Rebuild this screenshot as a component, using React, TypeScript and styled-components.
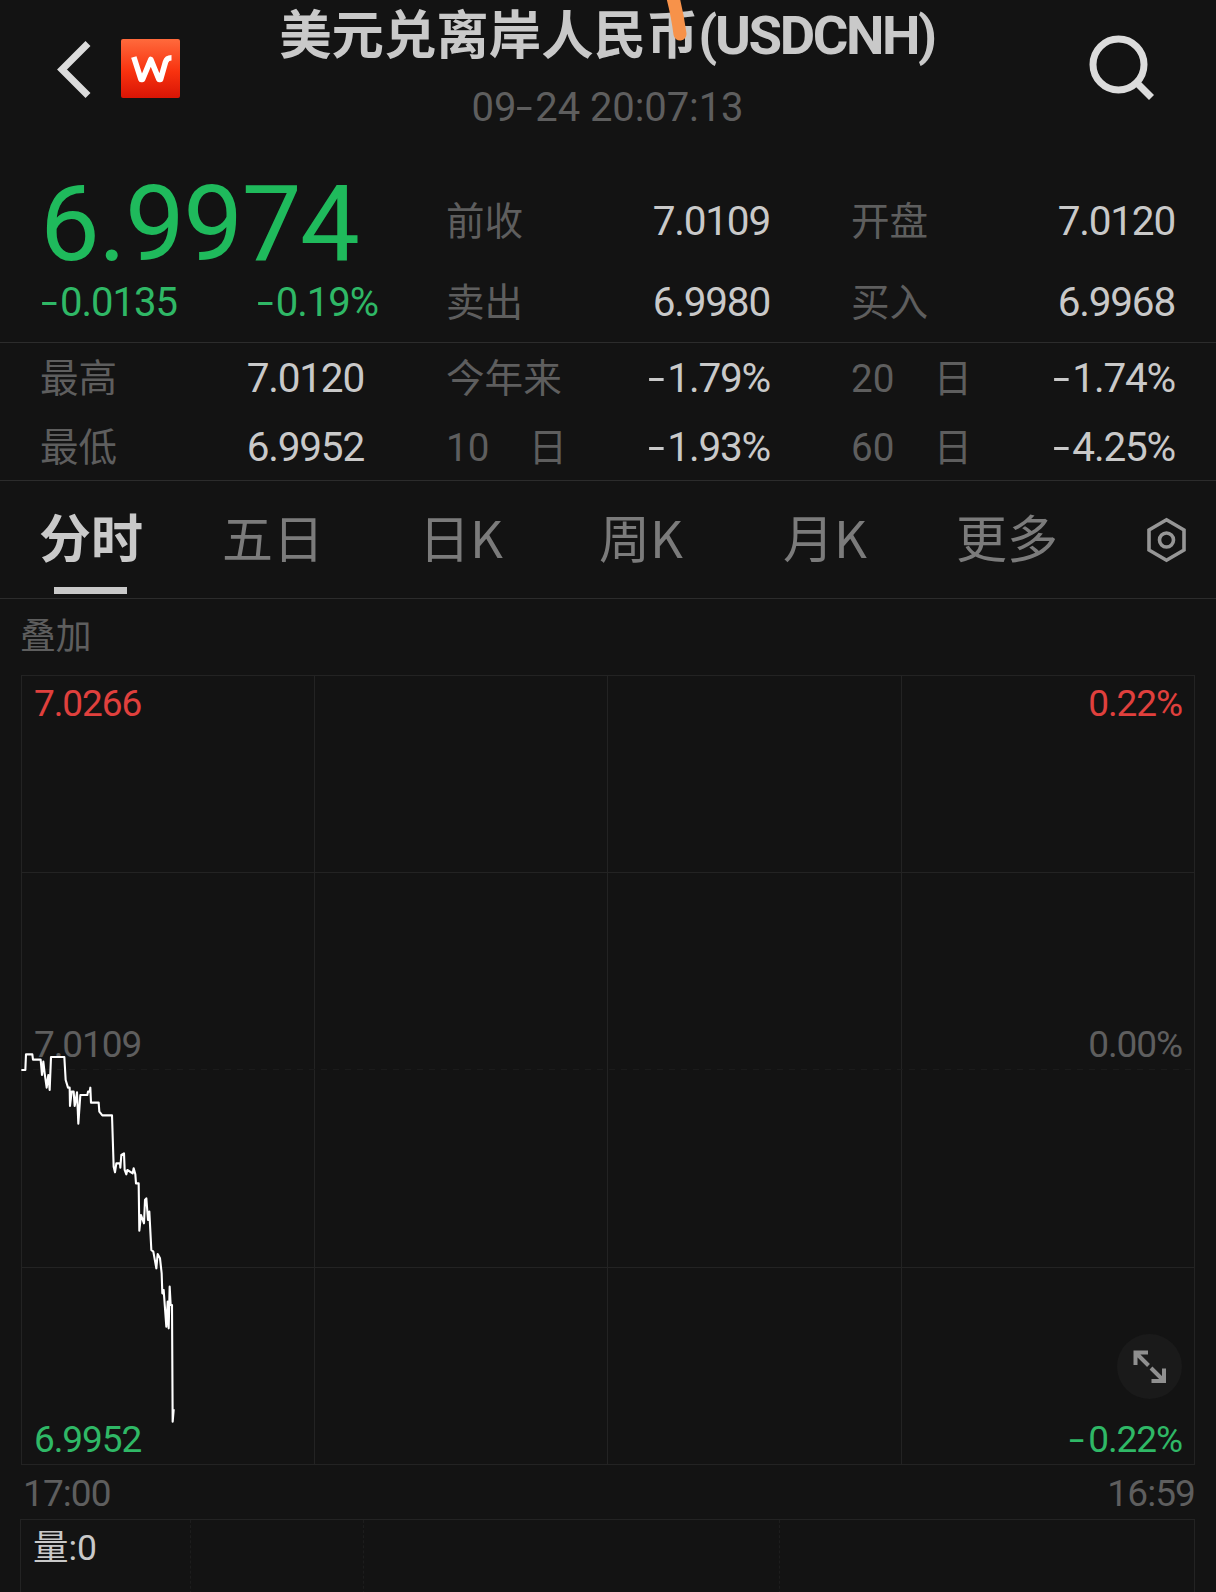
import React from 'react';
import styled, { createGlobalStyle } from 'styled-components';

const GlobalStyle = createGlobalStyle`
  * { box-sizing: border-box; }
  body { margin: 0; background: #131313; }
`;

const palette = {
  text: '#c9c9c9',
  muted: '#5e5e5e',
  tab: '#7b7b7b',
  up: '#e0403d',
  down: '#2fb866',
  line: '#2c2c2c',
  grid: '#232323',
};

const Screen = styled.div`
  width: 1216px;
  height: 1592px;
  overflow: hidden;
  display: flex;
  flex-direction: column;
  background: #131313;
  color: ${palette.text};
  font-family: Roboto, 'Noto Sans CJK SC', sans-serif;
  white-space: nowrap;

  > * {
    flex: none;
  }
`;

const Header = styled.header`
  position: relative;
  height: 160px;
  display: grid;
  grid-template-columns: 240px 1fr 240px;
`;

const HeaderLeft = styled.div`
  display: flex;
  align-items: center;
  gap: 29px;
  height: 137px;
  padding-left: 56px;
`;

const HeaderRight = styled.div`
  display: flex;
  justify-content: flex-end;
  padding: 34px 60px 0 0;
`;

const Logo = styled.div`
  width: 59px;
  height: 59px;
  border-radius: 2px;
  display: flex;
  align-items: center;
  justify-content: center;
  background: linear-gradient(#ff6a3c, #f8320f 55%, #d81505);
`;

const HeaderCenter = styled.div`
  display: flex;
  flex-direction: column;
  align-items: center;
`;

const Title = styled.h1`
  margin: 0 0 0 -2px;
  font-size: 52.4px;
  line-height: 70px;
  font-weight: 700;
`;

const Ticker = styled.span`
  font-size: 54.5px;
  letter-spacing: -2.4px;
`;

const Time = styled.div`
  margin: 7px 0 0 -1px;
  font-size: 40px;
  line-height: 60px;
  letter-spacing: -0.1px;
  color: ${palette.muted};
`;

const PenMark = styled.svg`
  position: absolute;
  left: 660px;
  top: 0;
`;

const Quote = styled.section`
  display: flex;
  height: 183px;
  padding-top: 20px;
  border-bottom: 1px solid ${palette.line};
`;

const PriceBlock = styled.div`
  width: 447px;
  padding-left: 41px;
`;

const Price = styled.div`
  height: 81px;
  margin-left: -1px;
  line-height: 87px;
  font-size: 106.5px;
  letter-spacing: -1.5px;
  color: #1fba5c;
`;

const Changes = styled.div`
  display: flex;
  justify-content: space-between;
  width: 337px;
  line-height: 83px;
  font-size: 40px;
  letter-spacing: -1px;
  color: ${palette.down};
`;

const QuoteGrid = styled.div`
  flex: 1;
  display: grid;
  grid-template-columns: 405px 364px;
  grid-template-rows: 81px 81px;
  line-height: 83px;
`;

const StatsGrid = styled.section`
  display: grid;
  height: 138px;
  padding-left: 41px;
  grid-template-columns: 406px 405px 364px;
  grid-template-rows: 69px 69px;
  line-height: 71px;
  border-bottom: 1px solid ${palette.line};
`;

const Cell = styled.div`
  width: 324px;
  margin-left: -1px;
  display: flex;
  justify-content: space-between;
`;

const Label = styled.span`
  display: flex;
  justify-content: space-between;
  min-width: 121px;
  font-size: 38.6px;
  color: ${palette.muted};
`;

const Value = styled.span`
  font-size: 40.5px;
  letter-spacing: -1.2px;
`;

const Dash = styled.span`
  display: inline-block;
  width: 19px;
  transform: scaleX(1.5);
  transform-origin: 0 50%;
`;

const Tabs = styled.nav`
  display: grid;
  height: 118px;
  padding-left: 39px;
  grid-template-columns: 183px 197px 180px 184px 173px 191px auto;
  border-bottom: 1px solid ${palette.line};
`;

const Tab = styled.div<{ $active?: boolean }>`
  display: flex;
  flex-direction: column;
  font-family: 'Noto Sans CJK SC', sans-serif;
  font-size: ${(p) => (p.$active ? 52 : 51)}px;
  font-weight: ${(p) => (p.$active ? 700 : 400)};
  line-height: 110px;
  color: ${(p) => (p.$active ? palette.text : palette.tab)};
`;

const Underline = styled.span`
  width: 73px;
  height: 7px;
  margin: -4px 0 0 15px;
  background: ${palette.text};
`;

const GearSlot = styled.div`
  padding-top: 36px;
`;

const Overlay = styled.div`
  height: 76px;
  padding-left: 20px;
  font-size: 35.8px;
  line-height: 77px;
  color: ${palette.muted};
`;

const Chart = styled.section`
  position: relative;
  display: flex;
  flex-direction: column;
  width: 1174px;
  height: 790px;
  margin-left: 21px;
  padding: 0 13px;
`;

const ChartCanvas = styled.svg`
  position: absolute;
  left: 0;
  top: 0;
`;

const ScaleRow = styled.div<{ $tone: string; $gap: number }>`
  display: flex;
  justify-content: space-between;
  margin-top: ${(p) => p.$gap}px;
  font-size: 37px;
  line-height: 56px;
  letter-spacing: -1.1px;
  color: ${(p) => p.$tone};
`;

const ExpandButton = styled.div`
  position: absolute;
  left: 1096px;
  top: 659px;
  width: 65px;
  height: 65px;
  border-radius: 50%;
  background: #1a1a1a;
`;

const TimeAxis = styled.div`
  display: flex;
  justify-content: space-between;
  height: 54px;
  padding: 0 21px 0 23px;
  font-size: 37px;
  line-height: 57px;
  letter-spacing: -0.9px;
  color: ${palette.muted};
`;

const Volume = styled.section`
  display: grid;
  grid-template-columns: 170px 173px 416px 1fr;
  width: 1175px;
  height: 80px;
  margin-left: 20px;
  border: 1px solid ${palette.grid};
  border-bottom: none;
`;

const VolumeCell = styled.div<{ $last?: boolean }>`
  padding-left: 12px;
  font-size: 35.5px;
  line-height: 56px;
  border-right: ${(p) => (p.$last ? 'none' : '1px dashed #1d1d1d')};
`;

function Num({ children }: { children: string }) {
  return (
    <span>
      {children.startsWith('-') ? <Dash>-</Dash> : null}
      {children.replace('-', '')}
    </span>
  );
}

function Stat({ label, value }: { label: string[]; value: string }) {
  return (
    <Cell>
      <Label>
        {label.map((part) => (
          <span key={part}>{part}</span>
        ))}
      </Label>
      <Value>
        <Num>{value}</Num>
      </Value>
    </Cell>
  );
}

const tabs = ['五日', '日K', '周K', '月K', '更多'];

const trend =
  '34,150 46,150 48,103 67,103 69,119 92,119 96,165 100,125 104,160 110,203 115,165 119,210 123,111 163,111 ' +
  '167,180 174,203 179,203 180,258 185,215 191,215 194,258 201,217 205,311 211,225 232,225 234,215 239,215 ' +
  '241,203 243,248 266,248 268,275 277,286 306,286 311,440 315,457 319,430 330,430 331,443 334,405 342,400 ' +
  '344,450 349,463 352,450 368,460 371,445 376,463 378,490 386,490 388,632 393,585 402,610 405,540 409,535 ' +
  '414,600 418,575 424,690 430,695 439,745 443,702 450,715 455,760 457,820 461,810 469,920 473,845 476,925 ' +
  '479,800 482,855 486,855 488,1205 491,1170 491,1168';

export default function App() {
  return (
    <>
      <GlobalStyle />
      <Screen>
        <Header>
          <HeaderLeft>
            <svg width="36" height="60" viewBox="0 0 36 60" fill="none">
              <path d="M32 4.500 6 30.500l26 26" stroke="#dcdcdc" strokeWidth="7" />
            </svg>
            <Logo>
              <svg width="44" height="32" viewBox="0 0 44 32" fill="none">
                <path
                  d="M4.800 4 12 26.500h1.500L21.800 6.500 30 26.500h1.500L36.500 9q1.300-4.300 6-4.300"
                  stroke="#fff"
                  strokeWidth="5.600"
                  strokeLinejoin="round"
                />
              </svg>
            </Logo>
          </HeaderLeft>
          <HeaderCenter>
            <Title>
              美元兑离岸人民币<Ticker>(USDCNH)</Ticker>
            </Title>
            <Time>
              09<Dash>-</Dash>24 20:07:13
            </Time>
          </HeaderCenter>
          <HeaderRight>
            <svg width="68" height="68" viewBox="0 0 68 68" fill="none" stroke="#dcdcdc">
              <circle cx="30.500" cy="30.500" r="25.500" strokeWidth="7" />
              <path d="M48 48 63.500 63.500" strokeWidth="7" />
            </svg>
          </HeaderRight>
          <PenMark width="40" height="48" viewBox="0 0 40 48" fill="none">
            <path d="M12 -6Q17 12 20 34" stroke="#f7924a" strokeWidth="13" strokeLinecap="round" />
          </PenMark>
        </Header>

        <Quote>
          <PriceBlock>
            <Price>6.9974</Price>
            <Changes>
              <Num>-0.0135</Num>
              <Num>-0.19%</Num>
            </Changes>
          </PriceBlock>
          <QuoteGrid>
            <Stat label={['前收']} value="7.0109" />
            <Stat label={['开盘']} value="7.0120" />
            <Stat label={['卖出']} value="6.9980" />
            <Stat label={['买入']} value="6.9968" />
          </QuoteGrid>
        </Quote>

        <StatsGrid>
          <Stat label={['最高']} value="7.0120" />
          <Stat label={['今年来']} value="-1.79%" />
          <Stat label={['20', '日']} value="-1.74%" />
          <Stat label={['最低']} value="6.9952" />
          <Stat label={['10', '日']} value="-1.93%" />
          <Stat label={['60', '日']} value="-4.25%" />
        </StatsGrid>

        <Tabs>
          <Tab $active>
            分时
            <Underline />
          </Tab>
          {tabs.map((t) => (
            <Tab key={t}>{t}</Tab>
          ))}
          <GearSlot>
            <svg width="42" height="46" viewBox="0 0 42 46" fill="none" stroke="#969696" strokeWidth="3.600">
              <path d="M19.500 2.800 37 13v20L19.500 43.200 2 33V13z" />
              <circle cx="19.500" cy="23" r="7" />
            </svg>
          </GearSlot>
        </Tabs>

        <Overlay>叠加</Overlay>

        <Chart>
          <ChartCanvas width="1175" height="790" viewBox="0 0 1175 790" fill="none">
            <g stroke={palette.grid}>
              <rect x="0.500" y="0.500" width="1173" height="789" />
              <path d="M293.500 0v790M586.500 0v790M880.500 0v790M0 197.500h1174M0 592.500h1174" />
              <path d="M0 394.500h1174" strokeDasharray="6 6" stroke="#1b1b1b" />
            </g>
          </ChartCanvas>
          <ScaleRow $tone={palette.up} $gap={1}>
            <Num>7.0266</Num>
            <Num>0.22%</Num>
          </ScaleRow>
          <ScaleRow $tone={palette.muted} $gap={285}>
            <Num>7.0109</Num>
            <Num>0.00%</Num>
          </ScaleRow>
          <ScaleRow $tone={palette.down} $gap={339}>
            <Num>6.9952</Num>
            <Num>-0.22%</Num>
          </ScaleRow>
          <ChartCanvas width="1175" height="790" viewBox="0 0 1175 790" fill="none">
            <g transform="scale(0.33333) translate(-33 1035)">
              <polyline points={trend} stroke="#fff" strokeWidth="6.300" strokeLinejoin="round" />
            </g>
          </ChartCanvas>
          <ExpandButton>
            <svg width="65" height="65" viewBox="0 0 65 65" fill="none" stroke="#8f8f8f" strokeWidth="4">
              <path d="M31 18.500H18.500V31M19 19l12.500 12.500M34 34l12.500 12.500M34.500 47H47V34.500" />
            </svg>
          </ExpandButton>
        </Chart>

        <TimeAxis>
          <span>17:00</span>
          <span>16:59</span>
        </TimeAxis>

        <Volume>
          <VolumeCell>量:0</VolumeCell>
          <VolumeCell />
          <VolumeCell />
          <VolumeCell $last />
        </Volume>
      </Screen>
    </>
  );
}
